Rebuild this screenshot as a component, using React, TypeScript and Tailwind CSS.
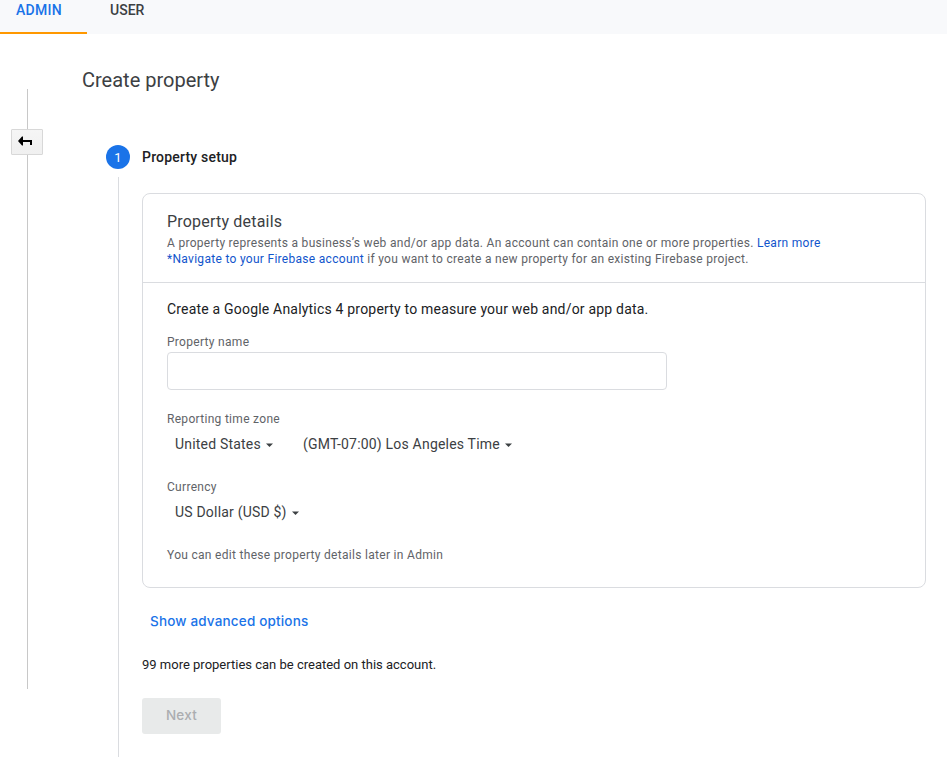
import React from "react";

function Caret({ className = "" }: { className?: string }) {
  return (
    <svg className={`block ${className}`} width="7" height="4" viewBox="0 0 7 4" fill="#3c4043" aria-hidden="true">
      <path d="M0 .5h7L3.5 4z" />
    </svg>
  );
}

function Select({ label, width }: { label: string; width: string }) {
  return (
    <button type="button" className="flex h-5 items-center gap-[5px] text-sm leading-5 text-[#3c4043]">
      <span className={`block whitespace-nowrap text-left tracking-[0.2px] ${width}`}>{label}</span>
      <Caret className="mt-0.5" />
    </button>
  );
}

function BackRail() {
  return (
    <aside className="flex w-[54px] shrink-0 flex-col items-center pt-[55px]">
      <div className="h-10 w-px bg-[#c8c8c8]" />
      <button type="button" aria-label="Back" className="flex h-[26px] w-8 items-start rounded-[1px] border border-[#d8d8d8] bg-gradient-to-b from-[#f5f5f5] to-[#f0f0f0] pt-1.5 pl-1.5">
        <svg width="14" height="10" viewBox="0 0 14 10" fill="#000" aria-hidden="true">
          <path d="M0 5 4 0.5h1V4h9v5h-2V6H5v3.5H4z" />
        </svg>
      </button>
      <div className="h-[534px] w-px bg-[#c8c8c8]" />
    </aside>
  );
}

export default function App() {
  return (
    <div className="h-[757px] w-full overflow-hidden bg-white font-['Roboto',sans-serif] text-[#202124]">
      <nav className="flex h-[34px] bg-[#f8f9fb] text-sm font-medium leading-5">
        <div className="h-full w-[87px] border-b-2 border-[#ff9800] pl-4 text-[#1a73e8]">
          <span className="tracking-[0.3px]">ADMIN</span>
        </div>
        <div className="pl-[23px] text-[#3c4043]">USER</div>
      </nav>

      <div className="flex h-[723px]">
        <BackRail />
        <main className="flex min-w-0 flex-1 flex-col pl-7">
          <h1 className="mt-[33px] h-[26px] text-[20px] leading-[26px] text-[#3c4043]">Create property</h1>

          <div className="mt-[52px] flex flex-1 pl-6">
            <div className="flex w-6 shrink-0 flex-col items-center">
              <div className="flex size-6 shrink-0 items-center justify-center rounded-full bg-[#1a73e8] pt-px text-[13px] leading-5 text-white">1</div>
              <div className="mt-2 ml-px w-px flex-1 bg-[#dadce0]" />
            </div>

            <div className="ml-3 w-[784px]">
              <h2 className="h-6 text-sm font-medium leading-6 tracking-[0.2px]">Property setup</h2>

              <section className="mt-6 h-[395px] rounded-lg border border-[#dadce0]">
                <header className="h-[89px] border-b border-[#dadce0] px-6 pt-4">
                  <h3 className="h-[25px] text-base leading-6 tracking-[0.2px] text-[#3c4043]">Property details</h3>
                  <p className="text-xs leading-4 tracking-[0.295px] text-[#5f6368]">
                    A property represents a business’s web and/or app data. An account can contain one or more properties.{" "}
                    <a className="text-[#1155cc]">Learn more</a>
                    <br />
                    <a className="text-[#1155cc]">*Navigate to your Firebase account</a> if you want to create a new property for an existing Firebase project.
                  </p>
                </header>

                <div className="px-6 pt-4 text-xs leading-4 tracking-[0.3px] text-[#5f6368]">
                  <p className="text-sm leading-5 tracking-[0.195px] text-[#202124]">
                    Create a Google Analytics 4 property to measure your web and/or app data.
                  </p>
                  <label className="mt-[15px] block">
                    Property name
                    <input type="text" className="mt-0.5 block h-[38px] w-[500px] rounded border border-[#dadce0]" />
                  </label>
                  <div className="mt-[21px]">Reporting time zone</div>
                  <div className="mt-[7px] flex gap-[30px] pl-2">
                    <Select label="United States" width="w-[86px]" />
                    <Select label="(GMT-07:00) Los Angeles Time" width="w-[197px]" />
                  </div>
                  <div className="mt-[25px]">Currency</div>
                  <div className="mt-[7px] pl-2">
                    <Select label="US Dollar (USD $)" width="w-[112px]" />
                  </div>
                  <p className="mt-[25px]">You can edit these property details later in Admin</p>
                </div>
              </section>

              <button type="button" className="mt-[23px] ml-2 block h-5 font-['Inter',sans-serif] text-[13.5px] font-medium leading-5 tracking-[0.17px] text-[#1a73e8]">
                Show advanced options
              </button>
              <p className="mt-6 text-[13px] leading-5">99 more properties can be created on this account.</p>
              <button type="button" disabled className="mt-[23px] block h-9 w-[79px] rounded-[3px] bg-[#e8eaea] pb-0.5 font-['Inter',sans-serif] text-[13.5px] font-medium tracking-[0.25px] text-[#abadb0]">
                Next
              </button>
            </div>
          </div>
        </main>
      </div>
    </div>
  );
}
